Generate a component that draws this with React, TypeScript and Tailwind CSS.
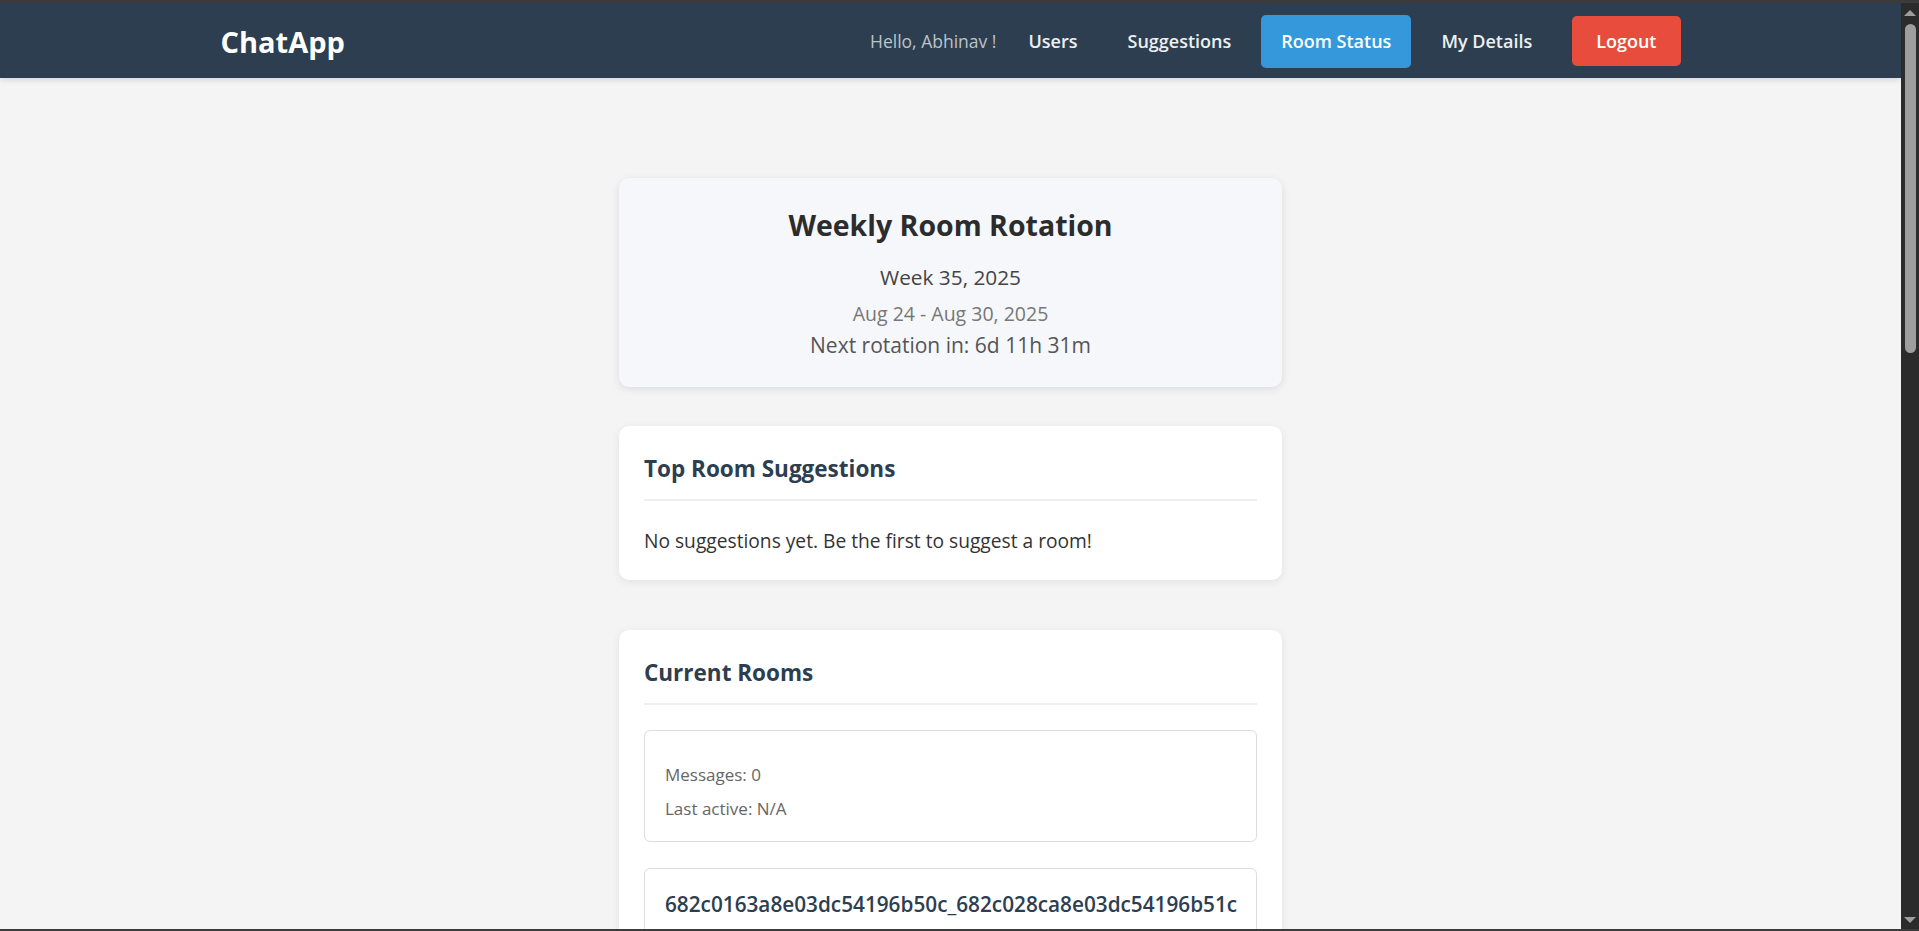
import React from 'react';

interface Room {
  name: string;
  messages: number;
  lastActive: string;
}

const rooms: Room[] = [
  { name: '', messages: 0, lastActive: 'N/A' },
  { name: '682c0163a8e03dc54196b50c_682c028ca8e03dc54196b51c', messages: 0, lastActive: 'N/A' },
];

function Navbar() {
  return (
    <nav className="bg-[#2c3e50] shadow-[0_2px_6px_rgba(0,0,0,0.12)]">
      <div className="max-w-[1460px] mx-auto h-[75px] pt-[1px] flex items-center justify-between">
        <div className="text-[29px] font-bold text-white leading-none">ChatApp</div>
        <div className="flex items-center gap-[10px] text-[18px]">
          <span className="text-[17.5px] text-[#bdc3c7] mr-[2px]">Hello, Abhinav !</span>
          <a className="px-[20px] py-[12px] font-semibold text-[#ecf0f1]">Users</a>
          <a className="px-[20px] py-[12px] font-semibold text-[#ecf0f1]">Suggestions</a>
          <a className="h-[53px] px-[20px] flex items-center rounded-[5px] bg-[#3498db] font-semibold text-white">
            Room Status
          </a>
          <a className="px-[20px] py-[12px] font-semibold text-[#ecf0f1]">My Details</a>
          <button className="ml-[10px] h-[50px] px-[24px] rounded-[5px] bg-[#e74c3c] font-semibold text-white">
            Logout
          </button>
        </div>
      </div>
    </nav>
  );
}

function RoomCard({ room }: { room: Room }) {
  return (
    <div className="border border-[#dddddd] rounded-[6px] p-[20px] mb-[26px]">
      <h4 className="text-[20.75px] leading-[30px] font-semibold text-[#2c3e50] mb-[12px] empty:h-0">
        {room.name}
      </h4>
      <p className="text-[17px] leading-[24px] text-[#666666]">Messages: {room.messages}</p>
      <p className="text-[17px] leading-[24px] text-[#666666] mt-[10px]">Last active: {room.lastActive}</p>
    </div>
  );
}

// window scrollbar as it shows in the capture (dark theme)
function ScrollRail() {
  return (
    <aside className="w-[18px] shrink-0 bg-[#2b2b2b] flex flex-col items-center">
      <div className="mt-[7px] w-0 h-0 border-x-[6px] border-x-transparent border-b-[6px] border-b-[#9e9e9e]" />
      <div className="mt-[8px] w-[11px] h-[329px] rounded-full bg-[#9e9e9e]" />
      <div className="flex-1" />
      <div className="mb-[6px] w-0 h-0 border-x-[6px] border-x-transparent border-t-[6px] border-t-[#9e9e9e]" />
    </aside>
  );
}

export default function App() {
  return (
    <div className="h-screen flex border-t-[3px] border-b-[2px] border-[#3b3b3b] bg-[#f4f4f4] font-['Open_Sans',sans-serif]">
      <div className="flex-1 min-w-0 overflow-y-auto [scrollbar-width:none]">
        <Navbar />

        <main className="w-[663px] mx-auto pt-[100px] pb-[60px]">
          {/* rotation summary */}
          <section className="bg-[#f5f7fa] rounded-[10px] shadow-[0_2px_8px_rgba(0,0,0,0.1)] pt-[28px] pb-[28px] text-center">
            <h2 className="text-[28.5px] leading-[38px] font-bold text-[#2c2c2c]">Weekly Room Rotation</h2>
            <p className="mt-[18px] text-[20.8px] leading-[30px] text-[#444444]">Week 35, 2025</p>
            <p className="mt-[9px] text-[19.5px] leading-[26px] text-[#777777]">Aug 24 - Aug 30, 2025</p>
            <p className="mt-[4px] text-[21px] leading-[28px] text-[#555555]">Next rotation in: 6d 11h 31m</p>
          </section>

          <section className="mt-[39px] bg-white rounded-[10px] shadow-[0_2px_8px_rgba(0,0,0,0.08)] px-[25px] pt-[28px] pb-[26px]">
            <h3 className="text-[22.5px] leading-[30px] font-bold text-[#2c3e50] pb-[15px] border-b-2 border-[#eeeeee]">
              Top Room Suggestions
            </h3>
            <p className="mt-[26px] text-[19.2px] leading-[27px] text-[#333333]">
              No suggestions yet. Be the first to suggest a room!
            </p>
          </section>

          <section className="mt-[50px] bg-white rounded-[10px] shadow-[0_2px_8px_rgba(0,0,0,0.08)] px-[25px] pt-[28px] pb-[1px]">
            <h3 className="text-[22.5px] leading-[30px] font-bold text-[#2c3e50] pb-[15px] border-b-2 border-[#eeeeee] mb-[25px]">
              Current Rooms
            </h3>
            {rooms.map((room, i) => (
              <RoomCard key={i} room={room} />
            ))}
          </section>
        </main>
      </div>
      <ScrollRail />
    </div>
  );
}
